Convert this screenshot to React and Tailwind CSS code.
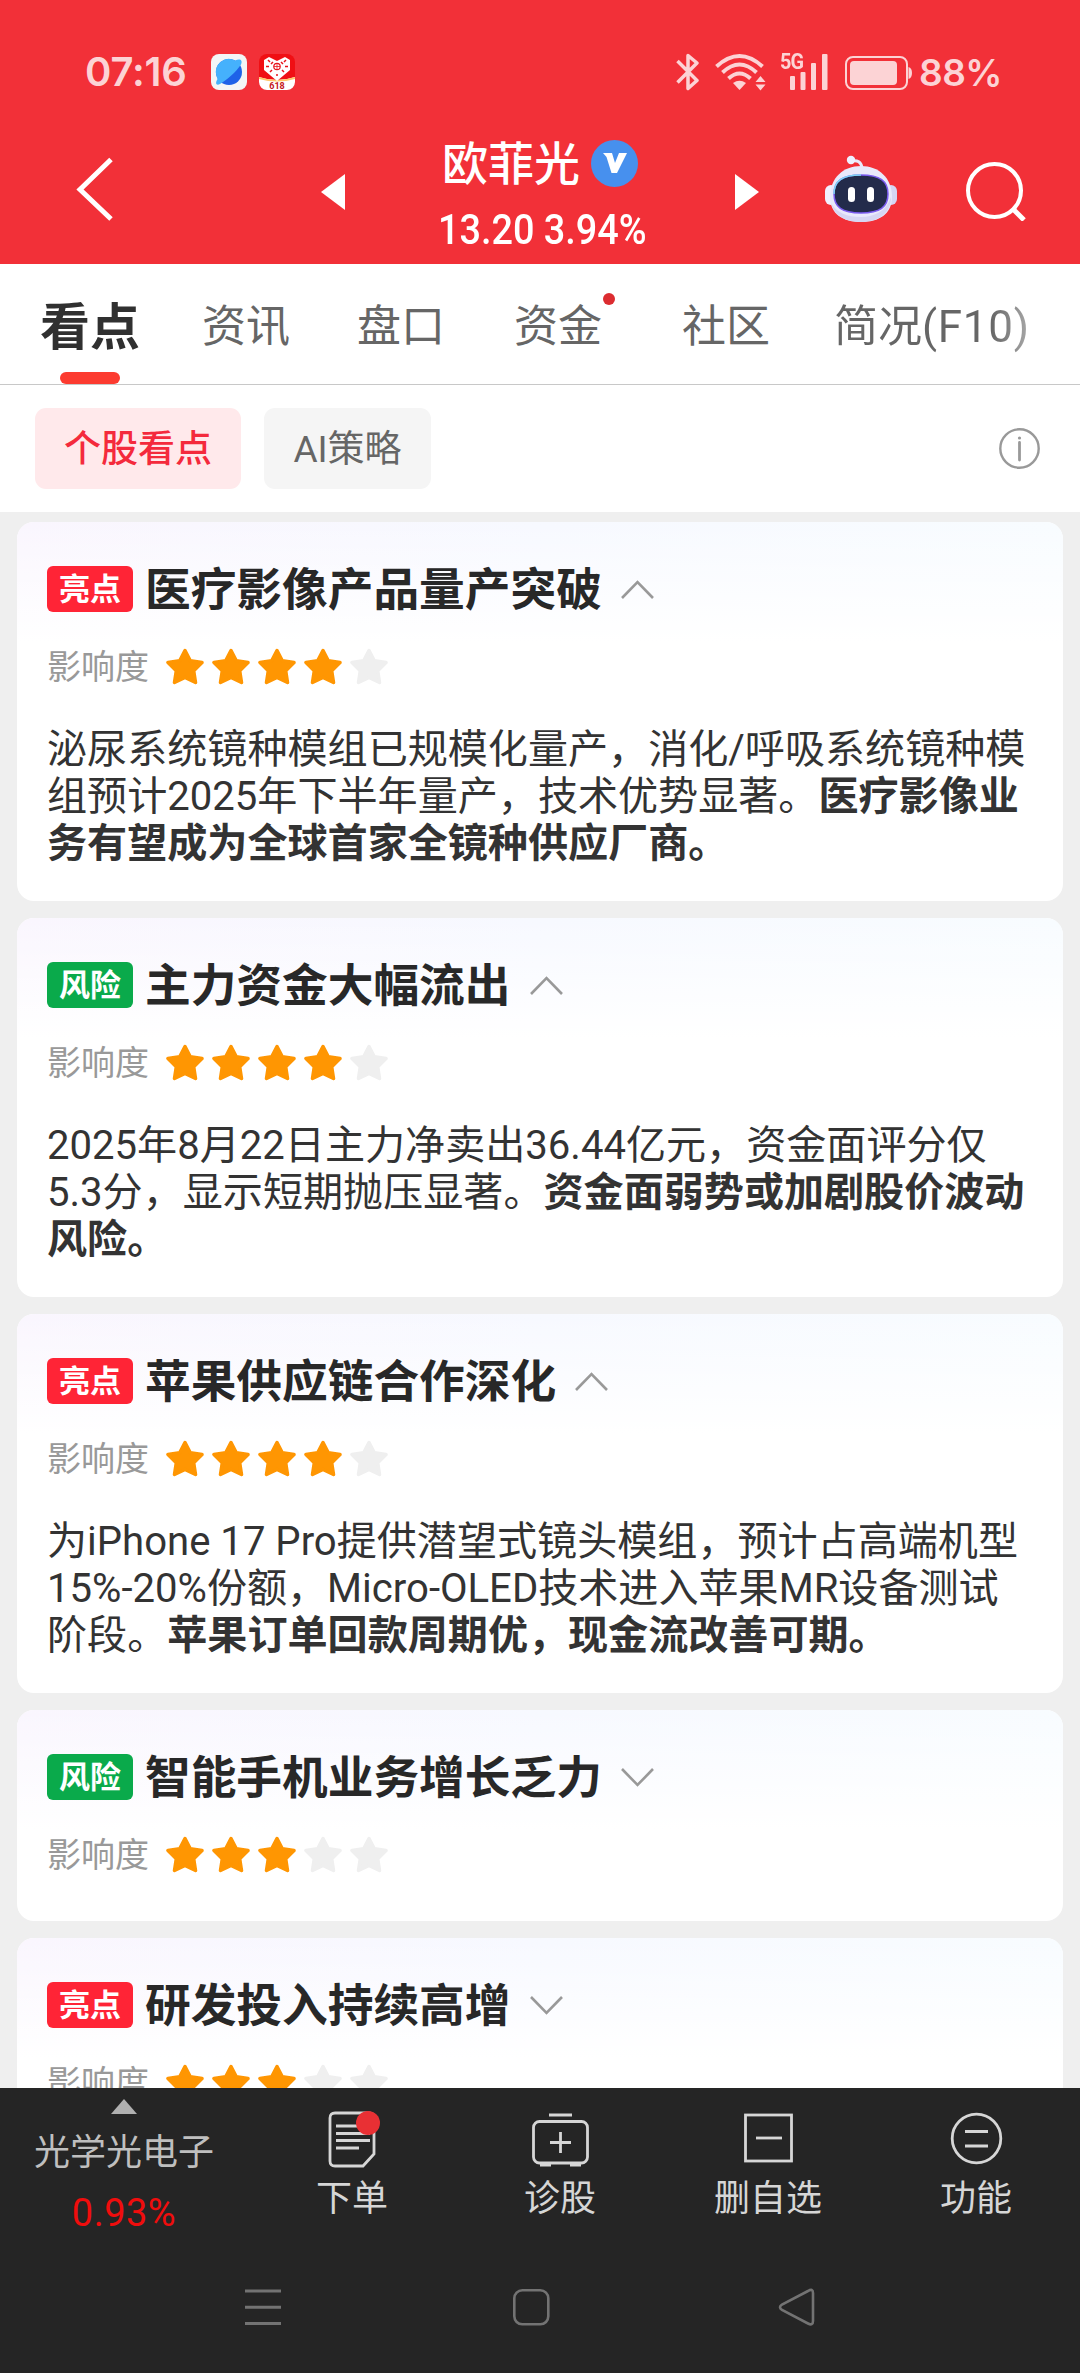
import React, { useState } from 'react';

const insights = [
  {
    id: 1,
    type: 'good',
    title: '医疗影像产品量产突破',
    stars: 4,
    open: true,
    lines: [
      [{ text: '泌尿系统镜种模组已规模化量产，消化/呼吸系统镜种模' }],
      [{ text: '组预计2025年下半年量产，技术优势显著。' }, { text: '医疗影像业', bold: true }],
      [{ text: '务有望成为全球首家全镜种供应厂商。', bold: true }],
    ],
  },
  {
    id: 2,
    type: 'risk',
    title: '主力资金大幅流出',
    stars: 4,
    open: true,
    lines: [
      [{ text: '2025年8月22日主力净卖出36.44亿元，资金面评分仅' }],
      [{ text: '5.3分，显示短期抛压显著。' }, { text: '资金面弱势或加剧股价波动', bold: true }],
      [{ text: '风险。', bold: true }],
    ],
  },
  {
    id: 3,
    type: 'good',
    title: '苹果供应链合作深化',
    stars: 4,
    open: true,
    lines: [
      [{ text: '为iPhone 17 Pro提供潜望式镜头模组，预计占高端机型' }],
      [{ text: '15%-20%份额，Micro-OLED技术进入苹果MR设备测试' }],
      [{ text: '阶段。' }, { text: '苹果订单回款周期优，现金流改善可期。', bold: true }],
    ],
  },
  { id: 4, type: 'risk', title: '智能手机业务增长乏力', stars: 3, open: false, lines: [] },
  { id: 5, type: 'good', title: '研发投入持续高增', stars: 3, open: false, lines: [] },
];

const StatusBar = () => (
  <div className="flex h-[96px] items-end pb-[5px] text-[#fcd3d5]">
    <div className="flex h-[38px] w-full items-center pl-[85px]">
      <span className="w-[126px] font-['Inter'] text-[40px] leading-[38px] font-semibold tracking-[-0.2px]">07:16</span>
      <svg width="36" height="36" viewBox="0 0 36 36">
        <rect width="36" height="36" rx="8" fill="#f3f5f6" />
        <circle cx="18" cy="18" r="13" fill="#1e62e8" />
        <path d="M5.500 22A13 13 0 0 1 24 6.500C29 4 32 6 30 10.500C25 18 16 26 9 30C5 32 4 29 6.500 25Z" fill="#45b1fc" />
      </svg>
      <svg className="ml-[12px]" width="36" height="36" viewBox="0 0 36 36">
        <rect width="36" height="36" rx="8" fill="#f00f14" />
        <path d="M0 23Q18 29 36 23V28A8 8 0 0 1 28 36H8A8 8 0 0 1 0 28Z" fill="#fff" />
        <path d="M0 23Q18 29 36 23V25Q18 30 0 25Z" fill="#ffc76b" />
        <path d="M5 6L10 3L18 7L26 3L31 6V16L18 27L5 16Z" fill="#fff" />
        <path d="M9 6l2 2M14 8l-2 2M22 8l2 2M27 6l-2 2M7 12.500h3M26 12.500h3M11 18l2-2M25 18l-2-2M18 20v2" stroke="#e8141b" strokeWidth="1.500" />
        <circle cx="18" cy="12.500" r="3.800" fill="#e8141b" />
        <circle cx="18" cy="12.500" r="2.600" fill="#fff" />
        <path d="M15 12.500h6M18 10v5" stroke="#e8141b" strokeWidth="0.800" />
        <text x="18" y="34.500" textAnchor="middle" fontSize="9" fontWeight="700" fontFamily="Roboto" fill="#c4161c">618</text>
      </svg>
      <svg className="ml-[381px]" width="23" height="38" viewBox="0 0 23 38" fill="none" stroke="currentColor" strokeWidth="3.500" strokeLinejoin="round">
        <path d="M1.500 8L21 27.500L12 35.500V2.500L21 10L1.500 29.500" />
      </svg>
      <svg className="ml-[16px]" width="51" height="38" viewBox="0 0 51 38" fill="none" stroke="currentColor" strokeWidth="4">
        <path d="M1.500 13.500Q24.500-7.500 47.500 13.500M7.500 19.500Q24.500 3.500 41.500 19.500M13.500 25.500Q24.500 15.500 35.500 25.500" />
        <path d="M18 30Q24.500 25.500 31 30L24.500 37Z" fill="currentColor" stroke="none" />
        <path d="M40.500 29L45.500 23L50.500 29ZM40.500 31.500H50.500L45.500 37.500Z" fill="currentColor" stroke="none" />
      </svg>
      <div className="relative ml-[14px] h-[38px] w-[48px]">
        <span className="absolute top-[-1px] left-0 origin-left scale-x-[0.9] font-['Roboto'] text-[22px] leading-[20px] font-bold tracking-[-1px]">5G</span>
        <svg className="absolute top-0 left-0" width="48" height="38" viewBox="0 0 48 38" fill="currentColor">
          <rect x="10" y="23" width="5" height="14" rx="1" />
          <rect x="20.500" y="19" width="5" height="18" rx="1" />
          <rect x="31" y="10" width="5" height="27" rx="1" />
          <rect x="42" y="1" width="5.500" height="36" rx="1" />
        </svg>
      </div>
      <svg className="ml-[17px]" width="67" height="38" viewBox="0 0 67 38">
        <rect x="1" y="4" width="61" height="32" rx="7" fill="none" stroke="currentColor" strokeWidth="2" />
        <rect x="5" y="8" width="47" height="24" rx="4" fill="currentColor" />
        <path d="M63.500 14Q67 15 67 20T63.500 26Z" fill="currentColor" />
      </svg>
      <span className="mt-[2px] ml-[7px] font-['Inter'] text-[37px] leading-[38px] font-semibold tracking-[-0.5px]">88%</span>
    </div>
  </div>
);

const RobotIcon = () => (
  <svg width="72" height="68" viewBox="0 0 72 68">
    <path d="M26 6Q36 4 37 13" fill="none" stroke="#e9e9fb" strokeWidth="3" />
    <circle cx="26" cy="5" r="4.200" fill="#eef0ff" />
    <rect x="0" y="30" width="12" height="20" rx="6" fill="#f1f0ff" />
    <rect x="60" y="30" width="12" height="20" rx="6" fill="#d5d5f4" />
    <path d="M36 11C54 11 67 23 67 42C67 59 54 67 36 67S5 59 5 42C5 23 18 11 36 11Z" fill="#e9e9fb" />
    <path d="M36 62C50 62 61 56 66 42C66 58 54 67 36 67C20 67 9 60 6 48C12 58 22 62 36 62Z" fill="#d6d6f3" />
    <path d="M36 20C55 20 63 26 63 39S55 58 36 58S9 52 9 39S17 20 36 20Z" fill="#232b4b" stroke="#7b5cf0" strokeWidth="1.500" />
    <path d="M9 39C9 26 17 20 36 20" fill="none" stroke="#7fd7f5" strokeWidth="1.500" />
    <rect x="23" y="32" width="7" height="15" rx="3.500" fill="#fff" />
    <rect x="42" y="32" width="7" height="15" rx="3.500" fill="#fff" />
  </svg>
);

const Header = () => (
  <div className="h-[264px] shrink-0 bg-[#f23038] text-white">
    <StatusBar />
    <div className="flex h-[168px] items-start pl-[76px]">
      <svg className="mt-[61px]" width="37" height="64" viewBox="0 0 37 64" fill="none" stroke="currentColor" strokeWidth="5">
        <path d="M35 2.500L4 32.500L35 62" />
      </svg>
      <svg className="mt-[78px] ml-[208px]" width="24" height="36" viewBox="0 0 24 36" fill="currentColor">
        <path d="M24 0V36L0 18Z" />
      </svg>
      <div className="ml-[93px] w-[208px]">
        <div className="mt-[36px] flex h-[62px] items-center pl-[4px]">
          <span className="mt-[2px] text-[46px] leading-[62px] font-medium whitespace-nowrap">欧菲光</span>
          <span className="ml-[11px] flex h-[47px] w-[47px] shrink-0 items-center justify-center rounded-full bg-[#4790ee]">
            <svg width="24" height="20" viewBox="0 0 24 20" fill="#fff">
              <path d="M0 0H9L12 10L16 0H24L14 20H8.500L3.500 4Z" />
            </svg>
          </span>
        </div>
        <div className="mt-[14px] origin-left scale-x-[0.9] font-['Roboto'] text-[42px] leading-[44px] font-medium whitespace-nowrap">13.20 3.94%</div>
      </div>
      <svg className="mt-[78px] ml-[89px]" width="24" height="36" viewBox="0 0 24 36" fill="currentColor">
        <path d="M0 0V36L24 18Z" />
      </svg>
      <div className="mt-[59px] ml-[66px]"><RobotIcon /></div>
      <svg className="mt-[65px] ml-[69px]" width="60" height="60" viewBox="0 0 60 60" fill="none" stroke="currentColor" strokeWidth="4">
        <circle cx="28.500" cy="29.500" r="26.500" />
        <path d="M47 48L58 59" strokeWidth="5" />
      </svg>
    </div>
  </div>
);

const Tabs = () => (
  <div className="flex h-[121px] shrink-0 items-start border-b border-[#c8c8c8] bg-white pl-[40px] text-[44px] leading-[60px] whitespace-nowrap text-[#666]">
    <div className="flex w-[100px] flex-col items-center">
      <span className="mt-[34px] text-[50px] font-bold text-[#303030]">看点</span>
      <span className="mt-[14px] h-[12px] w-[60px] rounded-full bg-[#fc3b30]" />
    </div>
    <span className="mt-[33px] ml-[62px]">资讯</span>
    <span className="mt-[33px] ml-[67px]">盘口</span>
    <span className="relative mt-[33px] ml-[69px]">
      资金
      <span className="absolute top-[-4px] right-[-13px] h-[12px] w-[12px] rounded-full bg-[#dc2c30]" />
    </span>
    <span className="mt-[33px] ml-[80px]">社区</span>
    <span className="mt-[33px] ml-[64px] bg-linear-to-r from-[#666] from-80% to-[#aaa] bg-clip-text text-transparent">
      简况<span className="tracking-[0.7px]">(F10)</span>
    </span>
  </div>
);

const Chips = () => (
  <div className="flex h-[127px] shrink-0 items-center bg-white pr-[40px] pb-[1px] pl-[35px] text-[37px] leading-[83px] whitespace-nowrap">
    <div className="h-[81px] w-[206px] rounded-[11px] bg-[#ffe9eb] text-center font-medium text-[#f42a3c]">个股看点</div>
    <div className="ml-[23px] h-[81px] w-[167px] rounded-[11px] bg-[#f5f5f5] text-center text-[#666]">AI策略</div>
    <svg className="ml-auto" width="41" height="41" viewBox="0 0 41 41" fill="none" stroke="#999">
      <circle cx="20.500" cy="20.500" r="19.200" strokeWidth="2.400" />
      <path d="M20.500 14.500V32" strokeWidth="2.800" strokeLinecap="round" />
      <circle cx="20.500" cy="10" r="1.600" fill="#999" stroke="none" />
    </svg>
  </div>
);

const Star = ({ active }) => (
  <svg width="38" height="37" viewBox="0 0 38 37">
    <path
      d="M19 2.500L24.300 12.700L36 14.600L27.700 22.800L29.500 34.500L19 29.500L8.500 34.500L10.300 22.800L2 14.600L13.700 12.700Z"
      fill={active ? '#ff9602' : '#efefef'}
      stroke={active ? '#ff9602' : '#efefef'}
      strokeWidth="3.500"
      strokeLinejoin="round"
    />
  </svg>
);

const InsightCard = ({ item, onToggle }) => (
  <div className={`relative shrink-0 overflow-hidden rounded-[17px] bg-white pl-[30px] ${item.open ? 'h-[379px]' : 'h-[211px]'}`}>
    <div className="absolute inset-x-0 top-0 h-[120px] bg-linear-to-r from-[#faf6fe] via-[#f7f9ff] to-[#f8fcff]" />
    <div className="absolute inset-x-0 top-0 h-[120px] bg-linear-to-b from-transparent to-white" />
    <div className="relative">
      <div className="flex h-[110px] items-end pb-[10px]">
        <div className="flex h-[66px] items-center">
          <span className={`flex h-[46px] w-[86px] items-center justify-center rounded-[6px] pt-[2px] text-[31px] leading-[44px] font-bold text-white ${item.type === 'good' ? 'bg-[#ff2436]' : 'bg-[#0aaa4b]'}`}>
            {item.type === 'good' ? '亮点' : '风险'}
          </span>
          <h2 className="mt-[3px] ml-[12px] text-[45.700px] leading-[66px] font-bold text-[#282828]">{item.title}</h2>
          <button onClick={() => onToggle(item.id)} className="ml-[19px]">
            <svg className={item.open ? '' : 'rotate-180'} width="33" height="19" viewBox="0 0 33 19" fill="none" stroke="#999" strokeWidth="2.600">
              <path d="M1 18L16.500 2L32 18" />
            </svg>
          </button>
        </div>
      </div>
      <div className="mt-[14px] flex h-[40px] items-center">
        <span className="mt-[1px] w-[119px] text-[34px] leading-[40px] text-[#999]">影响度</span>
        <div className="flex gap-[8px]">
          {[1, 2, 3, 4, 5].map((n) => (
            <Star key={n} active={n <= item.stars} />
          ))}
        </div>
      </div>
      {item.open && (
        <div className="mt-[40px] text-[40.100px] leading-[47px] whitespace-nowrap text-[#333]">
          {item.lines.map((line, i) => (
            <p key={i} className="h-[47px]">
              {line.map((part, j) => (
                <span key={j} className={part.bold ? 'font-bold' : ''}>{part.text}</span>
              ))}
            </p>
          ))}
        </div>
      )}
    </div>
  </div>
);

const actions = [
  {
    label: '下单',
    icon: (
      <>
        <path d="M8 3H42Q47 3 47 8V44L36 56H8Q3 56 3 51V8Q3 3 8 3Z" />
        <path d="M9 16H43M9 23.500H43M9 30.500H43M9 38H32" />
        <circle cx="41" cy="13" r="12" fill="#e93034" stroke="none" />
      </>
    ),
  },
  {
    label: '诊股',
    icon: (
      <>
        <rect x="-1.500" y="11.500" width="54" height="41.500" rx="6" />
        <path d="M14 5H37M25.500 22V43M15 32.500H36M5 55H16M35 55H46" />
      </>
    ),
  },
  {
    label: '删自选',
    icon: (
      <>
        <rect x="2.500" y="5" width="46" height="46" />
        <path d="M13 28H39" />
      </>
    ),
  },
  {
    label: '功能',
    icon: (
      <>
        <circle cx="25.500" cy="28.500" r="24.300" />
        <path d="M14 21.500H37M14 36H37" />
      </>
    ),
  },
];

const BottomBar = () => (
  <div className="relative h-[285px] shrink-0 bg-[#252525] text-[36px] whitespace-nowrap text-[#d6d6d6]">
    <div className="flex h-[152px]">
      <div className="flex w-[248px] flex-col items-center pt-[11px] text-[#bfbfbf]">
        <svg width="26" height="15" viewBox="0 0 26 15" fill="#b0b0b0">
          <path d="M13 0L26 15H0Z" />
        </svg>
        <span className="mt-[14px] leading-[50px]">光学光电子</span>
        <span className="mt-[11px] text-[38px] leading-[48px] tracking-[0.5px] text-[#f00d0d]">0.93%</span>
      </div>
      {actions.map((action) => (
        <div key={action.label} className="flex w-[208px] flex-col items-center pt-[22px]">
          <svg className="overflow-visible" width="51" height="58" viewBox="0 0 51 58" fill="none" stroke="currentColor" strokeWidth="2.800">
            {action.icon}
          </svg>
          <span className="mt-[6px] leading-[50px]">{action.label}</span>
        </div>
      ))}
    </div>
    <div className="flex h-[133px] items-start pt-[48px] pl-[244px]">
      <svg width="38" height="38" viewBox="0 0 38 38" stroke="#737373" strokeWidth="3">
        <path d="M1 3H37M1 19.300H37M1 35.500H37" />
      </svg>
      <svg className="ml-[230px]" width="38" height="38" viewBox="0 0 38 38" fill="none" stroke="#737373" strokeWidth="2.600">
        <rect x="2.300" y="2.300" width="34" height="34" rx="8" />
      </svg>
      <svg className="ml-[228px]" width="38" height="38" viewBox="0 0 38 38" fill="none" stroke="#737373" strokeWidth="2.600">
        <path d="M30 3Q35 0 35 5V33Q35 38 30 35.500L4 22Q0 19.300 4 16.500Z" />
      </svg>
    </div>
  </div>
);

const App = () => {
  const [items, setItems] = useState(insights);

  const handleToggle = (id) => {
    setItems(items.map((item) => (item.id === id && item.lines.length > 0 ? { ...item, open: !item.open } : item)));
  };

  return (
    <div className="flex h-[2373px] w-[1080px] flex-col overflow-hidden bg-[#efefef] font-['Roboto','Noto_Sans_CJK_SC',sans-serif]">
      <Header />
      <Tabs />
      <Chips />
      <div className="flex min-h-0 flex-1 flex-col gap-[17px] overflow-hidden px-[17px] pt-[10px]">
        {items.map((item) => (
          <InsightCard key={item.id} item={item} onToggle={handleToggle} />
        ))}
      </div>
      <BottomBar />
    </div>
  );
};

export default App;
